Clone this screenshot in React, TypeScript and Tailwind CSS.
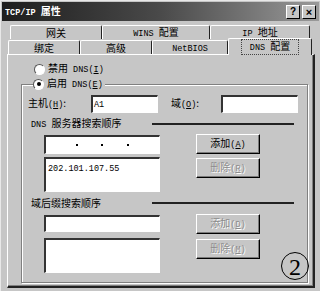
import type { ReactNode } from "react";

const ASCII = /([\x20-\x7e]+)/;

// CJK in Noto, ASCII runs in a narrower mono, like the bitmap SimSun look
function T({ s }: { s: string }) {
  return (
    <>
      {s.split(ASCII).map((p, i) =>
        i % 2 === 1 ? (
          <span key={i} className="whitespace-pre font-['Liberation_Mono',monospace] text-[8.5px]">
            {p}
          </span>
        ) : (
          p
        )
      )}
    </>
  );
}

function Acc({ label, k }: { label: string; k: string }) {
  return (
    <span className="whitespace-pre">
      <T s={label} />
      <span className="font-['Liberation_Mono',monospace] text-[8.5px]">
        (<u>{k}</u>)
      </span>
    </span>
  );
}

function Btn({ label, k, disabled }: { label: string; k: string; disabled?: boolean }) {
  return (
    <div className="flex h-[20px] w-[64px] items-center justify-center border border-t-white border-l-white border-r-black border-b-black bg-[#c6c6c6] shadow-[inset_-1px_-1px_0_#7a7a7a]">
      <span className={disabled ? "text-[#8c8c8c] [text-shadow:1px_1px_0_#fff]" : "text-black"}>
        <Acc label={label} k={k} />
      </span>
    </div>
  );
}

function Field({ className, children }: { className: string; children?: ReactNode }) {
  return (
    <div
      className={`border-t-2 border-l-2 border-t-[#333] border-l-[#333] border-r border-b border-r-white border-b-white bg-white ${className}`}
    >
      {children}
    </div>
  );
}

function Radio({ checked }: { checked?: boolean }) {
  return (
    <span className="flex h-[11px] w-[11px] items-center justify-center rounded-full border border-t-[#555] border-l-[#555] border-r-white border-b-white bg-white">
      {checked && <span className="h-[4px] w-[4px] rounded-full bg-black" />}
    </span>
  );
}

function Tab({ label, w, active }: { label: string; w: string; active?: boolean }) {
  return (
    <div
      className={`flex items-center justify-center whitespace-nowrap rounded-t-[2px] border-t border-l border-r border-t-white border-l-white border-r-[#222] bg-[#c6c6c6] leading-[12px] ${w} ${
        active ? "relative z-10 -mt-[1px] -mb-[1px] h-[17px]" : "h-[14px]"
      }`}
    >
      {active ? (
        <span className="border border-dotted border-[#444] px-[8px] leading-[11px]">
          <T s={label} />
        </span>
      ) : (
        <span>
          <T s={label} />
        </span>
      )}
    </div>
  );
}

function Section({ label }: { label: string }) {
  return (
    <div className="flex h-[12px] items-center pl-[9px]">
      <span className="w-[121px]">
        <T s={label} />
      </span>
      <span className="h-[2px] w-[142px] bg-[#222]" />
    </div>
  );
}

export default function App() {
  return (
    <div className="flex h-[291px] w-[320px] flex-col overflow-hidden border-l border-t border-l-[#e8e8e8] border-t-[#e8e8e8] bg-[#c6c6c6] text-[10px] leading-[14px] text-black font-['Noto_Sans_CJK_SC',sans-serif]">
      {/* title bar */}
      <div className="mx-[1px] mt-[1px] flex h-[19px] items-center justify-between bg-gradient-to-r from-[#1e1e1e] via-[#4a4a4a] to-[#9a9a9a] pl-[3px] pr-[3px]">
        <span className="font-bold text-white">
          <T s="TCP/IP 属性" />
        </span>
        <div className="flex gap-[2px]">
          <span className="flex h-[14px] w-[14px] items-center justify-center border border-t-white border-l-white border-r-black border-b-black bg-[#c6c6c6] text-[10px] font-bold font-['Liberation_Sans',sans-serif]">
            ?
          </span>
          <span className="flex h-[14px] w-[14px] items-center justify-center border border-t-white border-l-white border-r-black border-b-black bg-[#c6c6c6] text-[11px] font-bold font-['Liberation_Sans',sans-serif]">
            ×
          </span>
        </div>
      </div>

      {/* tabs */}
      <div className="ml-[9px] mt-[4px] flex">
        <Tab label="网关" w="w-[92px]" />
        <Tab label="WINS 配置" w="w-[108px]" />
        <Tab label="IP 地址" w="w-[100px]" />
      </div>
      <div className="ml-[7px] flex items-end">
        <Tab label="绑定" w="w-[72px]" />
        <Tab label="高级" w="w-[72px]" />
        <Tab label="NetBIOS" w="w-[76px]" />
        <Tab label="DNS 配置" w="w-[84px]" active />
      </div>

      {/* panel */}
      <div className="ml-[6px] flex h-[234px] w-[308px] flex-col border-t border-l border-r-2 border-b-2 border-t-white border-l-white border-r-[#222] border-b-[#222] shadow-[inset_-1px_-1px_0_#808080]">
        <label className="ml-[26px] mt-[7px] flex h-[14px] items-center gap-[3px]">
          <Radio />
          <Acc label="禁用 DNS" k="I" />
        </label>

        <div className="relative ml-[13px] mt-[8px] flex h-[199px] w-[287px] flex-col border border-[#808080] shadow-[inset_1px_1px_0_#fff,1px_1px_0_#fff]">
          <label className="-mt-[8px] ml-[11px] flex h-[14px] w-fit items-center gap-[3px] bg-[#c6c6c6] pr-[2px]">
            <Radio checked />
            <Acc label="启用 DNS" k="E" />
          </label>

          <div className="mt-[4px] flex items-center pl-[6px]">
            <span className="w-[63px]">
              <Acc label="主机" k="H" />:
            </span>
            <Field className="flex h-[18px] w-[67px] items-center pl-[1px]">
              <T s="A1" />
            </Field>
            <span className="ml-[13px] w-[50px]">
              <Acc label="域" k="O" />:
            </span>
            <Field className="h-[18px] w-[77px]" />
          </div>

          <div className="mt-[5px]">
            <Section label="DNS 服务器搜索顺序" />
          </div>

          <div className="mt-[5px] flex pl-[22px]">
            <div className="flex w-[116px] flex-col gap-[3px]">
              <Field className="flex h-[19px] items-center justify-around px-[18px]">
                <span className="h-[2px] w-[2px] bg-black" />
                <span className="h-[2px] w-[2px] bg-black" />
                <span className="h-[2px] w-[2px] bg-black" />
              </Field>
              <Field className="h-[35px] pl-[2px] pt-[1px]">
                <T s="202.101.107.55" />
              </Field>
            </div>
            <div className="-mt-[1px] ml-[36px] flex flex-col gap-[4px]">
              <Btn label="添加" k="A" />
              <Btn label="删除" k="R" disabled />
            </div>
          </div>

          <div className="mt-[5px]">
            <Section label="域后缀搜索顺序" />
          </div>

          <div className="mt-[6px] flex pl-[22px]">
            <div className="flex w-[116px] flex-col gap-[6px]">
              <Field className="h-[17px]" />
              <Field className="h-[35px]" />
            </div>
            <div className="-mt-[1px] ml-[36px] flex flex-col gap-[5px]">
              <Btn label="添加" k="D" disabled />
              <Btn label="删除" k="M" disabled />
            </div>
          </div>

          {/* annotation mark over the dialog */}
          <span className="absolute bottom-[2px] right-[-2px] flex h-[28px] w-[28px] items-center justify-center rounded-full border-[1.5px] border-black pt-[1px] text-[24px] leading-none font-['Liberation_Serif',serif]">
            2
          </span>
        </div>
      </div>
    </div>
  );
}
